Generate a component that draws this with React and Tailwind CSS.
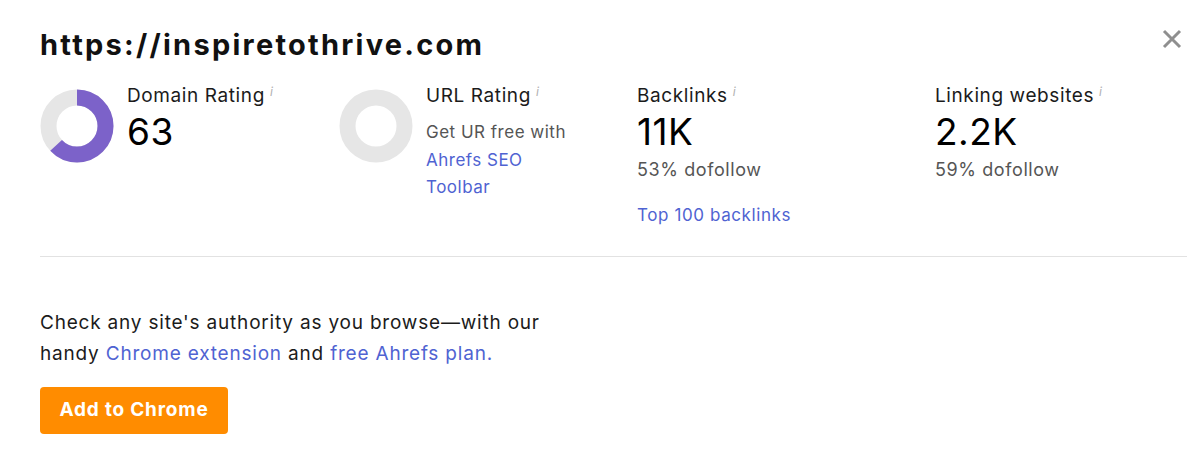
import React from 'react';

const Donut = ({ value }) => {
    // ring drawn with a stroked circle; value is 0..100
    const r = 28.5;
    const c = 2 * Math.PI * r;
    return (
        <svg width="74" height="74" viewBox="0 0 74 74" className="shrink-0">
            <circle cx="37" cy="37" r={r} fill="none" stroke="#e6e6e6" strokeWidth="16" />
            {value > 0 && (
                <circle
                    cx="37"
                    cy="37"
                    r={r}
                    fill="none"
                    stroke="#7c62c9"
                    strokeWidth="16"
                    strokeDasharray={`${(c * value) / 100} ${c}`}
                    transform="rotate(-90 37 37)"
                />
            )}
        </svg>
    );
};

const Info = () => (
    <span className="ml-[5px] text-[12px] leading-[12px] text-[#b0b0b0] italic relative top-[2px] tracking-normal">i</span>
);

const Label = ({ children }) => (
    <div className="text-[19px] leading-[24px] text-[#1b1b1b] tracking-[0.6px] flex items-start">
        {children}
        <Info />
    </div>
);

const Big = ({ children }) => (
    <div className="text-[37px] leading-[42px] text-black mt-[3px] tracking-[0.5px]">{children}</div>
);

const App = () => {
    return (
        <div className="w-[1200px] h-[456px] bg-white relative" style={{ fontFamily: 'Inter, "Noto Sans", sans-serif' }}>
            <button className="absolute right-[17px] top-[28px] text-[#8f8f8f]">
                <svg width="22" height="22" viewBox="0 0 22 22">
                    <path d="M3 3 L19 19 M19 3 L3 19" stroke="currentColor" strokeWidth="3" />
                </svg>
            </button>

            <div className="pl-10 pr-[13px] pt-[26px]">
                <h1 className="text-[29px] leading-[38px] font-bold text-[#111] tracking-[2.25px]">
                    https://inspiretothrive.com
                </h1>

                <div className="grid grid-cols-[299px_298px_298px_1fr] mt-[20px] pb-[28px] border-b border-[#e2e2e2]">
                    <div className="flex gap-[13px]">
                        <div className="pt-[5px]"><Donut value={63} /></div>
                        <div>
                            <Label>Domain Rating</Label>
                            <Big>63</Big>
                        </div>
                    </div>

                    <div className="flex gap-[13px]">
                        <div className="pt-[5px]"><Donut value={0} /></div>
                        <div>
                            <Label>URL Rating</Label>
                            <div className="text-[17px] leading-[27.5px] text-[#555] tracking-[0.5px] mt-[11px]">
                                <div>Get UR free with</div>
                                <a className="text-[#4f63d2] block">Ahrefs SEO<br />Toolbar</a>
                            </div>
                        </div>
                    </div>

                    <div>
                        <Label>Backlinks</Label>
                        <Big>11K</Big>
                        <div className="text-[18px] leading-[26px] text-[#555] tracking-[0.6px] mt-[4px]">53% dofollow</div>
                        <a className="block text-[17px] leading-[26px] text-[#4f63d2] tracking-[0.6px] mt-[19px]">Top 100 backlinks</a>
                    </div>

                    <div>
                        <Label>Linking websites</Label>
                        <Big>2.2K</Big>
                        <div className="text-[18px] leading-[26px] text-[#555] tracking-[0.6px] mt-[4px]">59% dofollow</div>
                    </div>
                </div>

                <p className="mt-[50px] text-[19px] leading-[31px] text-[#1b1b1b] tracking-[0.8px] w-[540px]">
                    Check any site's authority as you browse—with our handy{' '}
                    <a className="text-[#4f63d2]">Chrome extension</a> and{' '}
                    <a className="text-[#4f63d2]">free Ahrefs plan.</a>
                </p>

                <button className="mt-[18px] w-[188px] h-[47px] rounded-[4px] bg-[#ff8c00] text-white font-bold text-[19px] tracking-[0.8px]">
                    Add to Chrome
                </button>
            </div>
        </div>
    );
};

export default App;
